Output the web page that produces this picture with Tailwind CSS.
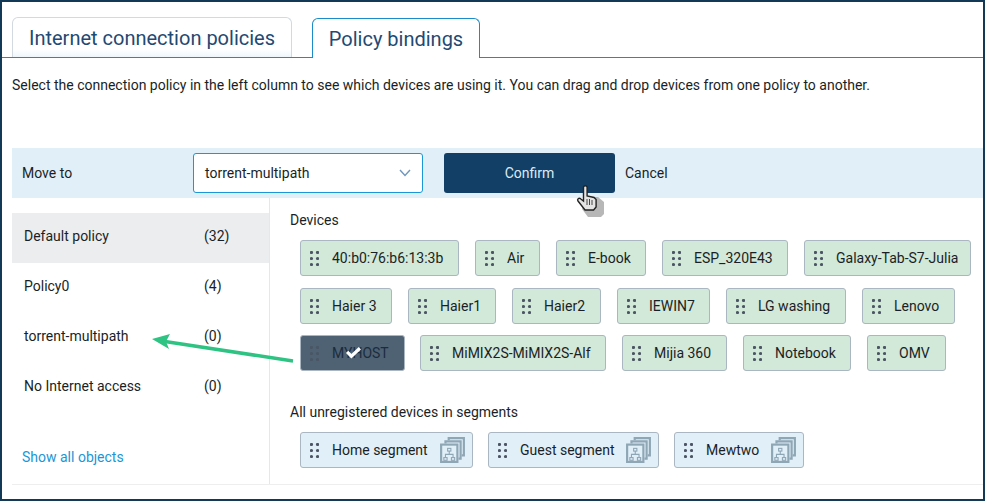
<!DOCTYPE html>
<html lang="en">
<head>
  <meta charset="UTF-8">
  <title>Policy bindings</title>
  <script src="https://cdn.jsdelivr.net/npm/@tailwindcss/browser@4"></script>
</head>
<body class="bg-white">
  <svg width="0" height="0" class="absolute">
    <defs>
      <g id="grip" fill="#4b5563">
        <circle cx="1.5" cy="1.5" r="1.6"/><circle cx="7.5" cy="1.5" r="1.6"/>
        <circle cx="1.5" cy="7.5" r="1.6"/><circle cx="7.5" cy="7.5" r="1.6"/>
        <circle cx="1.5" cy="13.5" r="1.6"/><circle cx="7.5" cy="13.5" r="1.6"/>
      </g>
      <symbol id="stack" viewBox="0 0 23 24">
        <g fill="none" stroke="#8fa6b5">
          <path d="M8 3V1h14v16h-2" stroke-width="2"/>
          <path d="M5 6V4h14v16h-2" stroke-width="2"/>
          <rect x="1" y="7" width="15" height="16" stroke-width="2"/>
          <path d="M8.5 13v3M5 19v-3h7v3" stroke-width="1"/>
          <rect x="7" y="10.500" width="3" height="2.500" stroke-width="1"/>
          <rect x="3.500" y="19" width="3" height="2.500" stroke-width="1"/>
          <rect x="10.500" y="19" width="3" height="2.500" stroke-width="1"/>
        </g>
      </symbol>
    </defs>
  </svg>

  <div class="relative w-[985px] h-[501px] overflow-hidden border-2 border-[#123a57] font-['Roboto',sans-serif] text-[14px] text-[#1a1f26]">
    <!-- tabs -->
    <div class="h-[56px] pl-[10px] flex items-end border-b border-[#1b8cc9]">
      <div class="w-[280px] h-[40px] flex items-center justify-center rounded-t-md border border-b-0 border-[#d3d9e0] text-[20px] text-[#1f4a73] bg-gradient-to-b from-white from-80% to-[#eef6fb]">Internet connection policies</div>
      <div class="ml-[20px] w-[168px] h-[40px] mb-[-1px] flex items-center justify-center rounded-t-md border border-b-0 border-[#1b8cc9] bg-white text-[20px] text-[#1f4a73]">Policy bindings</div>
    </div>

    <p class="pl-[10px] pt-[19px] h-[90px] leading-[16px]">Select the connection policy in the left column to see which devices are using it. You can drag and drop devices from one policy to another.</p>

    <!-- move bar -->
    <div class="ml-[10px] h-[50px] bg-[#e1eff9] flex items-center">
      <span class="w-[181px] pl-[10px]">Move to</span>
      <div class="w-[230px] h-[40px] bg-white border border-[#1b96d6] rounded-[3px] flex items-center justify-between pl-[11px] pr-[11px]">
        <span>torrent-multipath</span>
        <svg width="12" height="8" viewBox="0 0 12 8" fill="none" stroke="#6f97bd" stroke-width="1.400"><path d="M1 1l5 5.500L11 1"/></svg>
      </div>
      <button class="ml-[21px] w-[171px] h-[40px] bg-[#123f66] rounded-[3px] text-[#dcebf6]">Confirm</button>
      <span class="ml-[10px]">Cancel</span>
    </div>

    <div class="flex h-[287px] border-b border-[#eeeeee] ml-[10px]">
      <!-- policies -->
      <div class="w-[258px] shrink-0 border-r border-[#e5e7eb] pt-[15px] flex flex-col">
        <div class="h-[50px] flex items-center pl-[12px] pb-[4px] bg-[#ecedef]"><span class="w-[180px]">Default policy</span><span>(32)</span></div>
        <div class="h-[50px] flex items-center pl-[12px] pb-[4px]"><span class="w-[180px]">Policy0</span><span>(4)</span></div>
        <div class="h-[50px] flex items-center pl-[12px] pb-[4px]"><span class="w-[180px]">torrent-multipath</span><span>(0)</span></div>
        <div class="h-[50px] flex items-center pl-[12px] pb-[4px]"><span class="w-[180px]">No Internet access</span><span>(0)</span></div>
        <a class="mt-[34px] pl-[10px] text-[#1b96d6]">Show all objects</a>
      </div>

      <!-- devices -->
      <div class="flex-1 pl-[20px] pt-[14px]">
        <div class="leading-[16px]">Devices</div>
        <div class="ml-[10px] mt-[12px] flex flex-col">
          <div class="flex gap-[16px]">
            <div class="h-[36px] w-[159px] flex items-center pl-[9px] bg-[#d2e8d8] border border-[#aab6c1] rounded-[3px]"><svg width="9" height="15" class="mr-[13px]"><use href="#grip"/></svg>40:b0:76:b6:13:3b</div>
            <div class="h-[36px] w-[65px] flex items-center pl-[9px] bg-[#d2e8d8] border border-[#aab6c1] rounded-[3px]"><svg width="9" height="15" class="mr-[13px]"><use href="#grip"/></svg>Air</div>
            <div class="h-[36px] w-[90px] flex items-center pl-[9px] bg-[#d2e8d8] border border-[#aab6c1] rounded-[3px]"><svg width="9" height="15" class="mr-[13px]"><use href="#grip"/></svg>E-book</div>
            <div class="h-[36px] w-[126px] flex items-center pl-[9px] bg-[#d2e8d8] border border-[#aab6c1] rounded-[3px]"><svg width="9" height="15" class="mr-[13px]"><use href="#grip"/></svg>ESP_320E43</div>
            <div class="h-[36px] w-[167px] flex items-center pl-[9px] bg-[#d2e8d8] border border-[#aab6c1] rounded-[3px]"><svg width="9" height="15" class="mr-[13px]"><use href="#grip"/></svg>Galaxy-Tab-S7-Julia</div>
          </div>
          <div class="mt-[12px] flex gap-[16px]">
            <div class="h-[36px] w-[92px] flex items-center pl-[9px] bg-[#d2e8d8] border border-[#aab6c1] rounded-[3px]"><svg width="9" height="15" class="mr-[13px]"><use href="#grip"/></svg>Haier 3</div>
            <div class="h-[36px] w-[88px] flex items-center pl-[9px] bg-[#d2e8d8] border border-[#aab6c1] rounded-[3px]"><svg width="9" height="15" class="mr-[13px]"><use href="#grip"/></svg>Haier1</div>
            <div class="h-[36px] w-[89px] flex items-center pl-[9px] bg-[#d2e8d8] border border-[#aab6c1] rounded-[3px]"><svg width="9" height="15" class="mr-[13px]"><use href="#grip"/></svg>Haier2</div>
            <div class="h-[36px] w-[93px] flex items-center pl-[9px] bg-[#d2e8d8] border border-[#aab6c1] rounded-[3px]"><svg width="9" height="15" class="mr-[13px]"><use href="#grip"/></svg>IEWIN7</div>
            <div class="h-[36px] w-[120px] flex items-center pl-[9px] bg-[#d2e8d8] border border-[#aab6c1] rounded-[3px]"><svg width="9" height="15" class="mr-[13px]"><use href="#grip"/></svg>LG washing</div>
            <div class="h-[36px] w-[93px] flex items-center pl-[9px] bg-[#d2e8d8] border border-[#aab6c1] rounded-[3px]"><svg width="9" height="15" class="mr-[13px]"><use href="#grip"/></svg>Lenovo</div>
          </div>
          <div class="mt-[11px] flex gap-[16px]">
            <div class="relative h-[36px] w-[105px] mr-[-1px] flex items-center pl-[9px] bg-[#4e6274] border border-[#aab6c1] rounded-[3px] text-[#1c2c3d]"><svg width="9" height="15" class="mr-[13px]"><use href="#grip"/></svg>MYHOST
              <svg class="absolute left-[44px] top-[10px]" width="17" height="13" viewBox="0 0 16 12" fill="none" stroke="#fff" stroke-width="3"><path d="M2 5.500 6 9.500 14 2"/></svg>
            </div>
            <div class="h-[36px] w-[186px] flex items-center pl-[9px] bg-[#d2e8d8] border border-[#aab6c1] rounded-[3px]"><svg width="9" height="15" class="mr-[13px]"><use href="#grip"/></svg>MiMIX2S-MiMIX2S-Alf</div>
            <div class="h-[36px] w-[105px] flex items-center pl-[9px] bg-[#d2e8d8] border border-[#aab6c1] rounded-[3px]"><svg width="9" height="15" class="mr-[13px]"><use href="#grip"/></svg>Mijia 360</div>
            <div class="h-[36px] w-[108px] flex items-center pl-[9px] bg-[#d2e8d8] border border-[#aab6c1] rounded-[3px]"><svg width="9" height="15" class="mr-[13px]"><use href="#grip"/></svg>Notebook</div>
            <div class="h-[36px] w-[79px] flex items-center pl-[9px] bg-[#d2e8d8] border border-[#aab6c1] rounded-[3px]"><svg width="9" height="15" class="mr-[13px]"><use href="#grip"/></svg>OMV</div>
          </div>
        </div>
        <div class="mt-[33px] leading-[16px]">All unregistered devices in segments</div>
        <div class="ml-[10px] mt-[12px] flex gap-[15px]">
          <div class="h-[36px] w-[173px] flex items-center justify-between pl-[9px] pr-[7px] bg-[#e1eff9] border border-[#aab6c1] rounded-[3px]"><span class="flex items-center"><svg width="9" height="15" class="mr-[13px]"><use href="#grip"/></svg>Home segment</span><svg width="25" height="26"><use href="#stack"/></svg></div>
          <div class="h-[36px] w-[171px] flex items-center justify-between pl-[9px] pr-[7px] bg-[#e1eff9] border border-[#aab6c1] rounded-[3px]"><span class="flex items-center"><svg width="9" height="15" class="mr-[13px]"><use href="#grip"/></svg>Guest segment</span><svg width="25" height="26"><use href="#stack"/></svg></div>
          <div class="h-[36px] w-[130px] flex items-center justify-between pl-[9px] pr-[7px] bg-[#e1eff9] border border-[#aab6c1] rounded-[3px]"><span class="flex items-center"><svg width="9" height="15" class="mr-[13px]"><use href="#grip"/></svg>Mewtwo</span><svg width="25" height="26"><use href="#stack"/></svg></div>
        </div>
      </div>
    </div>

    <!-- green arrow over the list -->
    <svg class="absolute left-[148px] top-[330px]" width="150" height="34" viewBox="0 0 150 34" fill="none">
      <path d="M143 29 15 9.500" stroke="#2fc383" stroke-width="3.500"/>
      <path d="M2 7 20 2 16 9.500 19 17Z" fill="#2fc383"/>
    </svg>

    <!-- hand cursor -->
    <svg class="absolute left-[574px] top-[183px]" width="30" height="33" viewBox="0 0 30 33">
      <path d="M12 12h10l6 5v12l-3 3H12l-6-8z" fill="#a5a5a5" opacity=".8"/>
      <path d="M7.500 2.500a1.800 1.800 0 0 1 3.600 0V11l7 1.500 2 2V22l-2.500 3H9L2 16c-1.200-1.700.8-3.400 2.500-2.300L7.500 16z" fill="#e4e4e4" stroke="#222" stroke-width="1.400"/>
      <path d="M11 14v6M13.500 14v6M16 15v5" stroke="#333" stroke-width=".9"/>
    </svg>
  </div>
</body>
</html>
